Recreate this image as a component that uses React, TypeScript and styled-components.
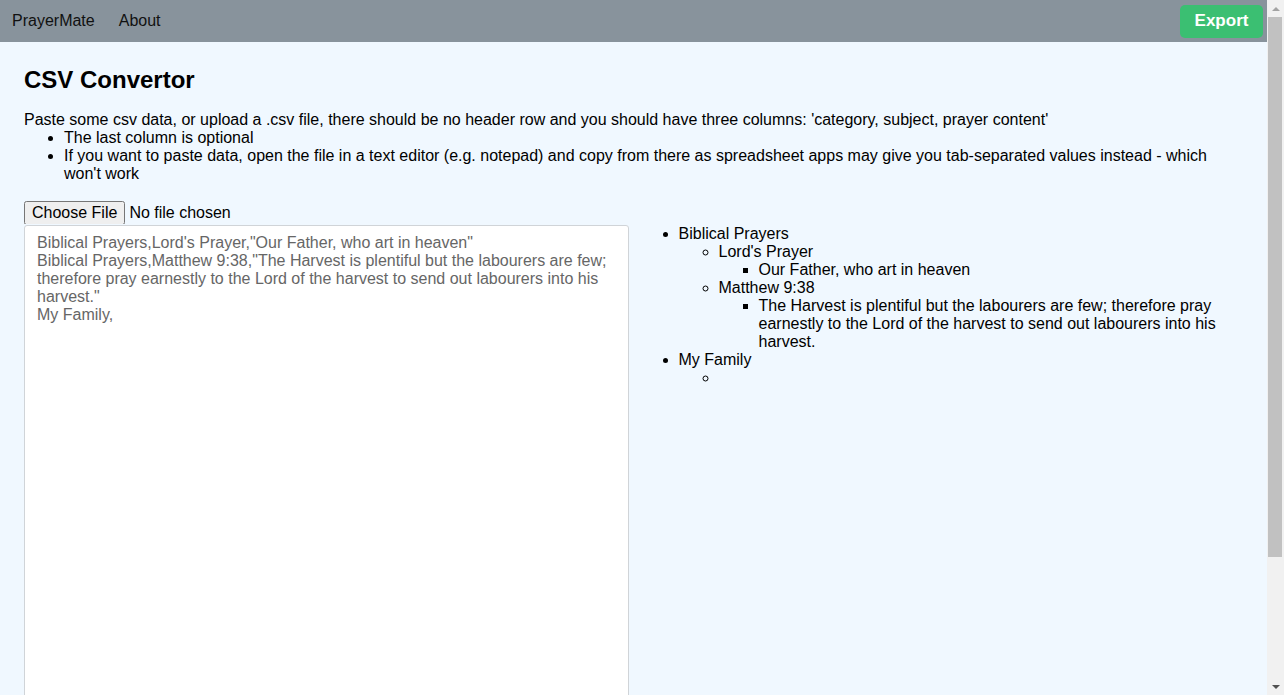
import React, { useState } from 'react';
import styled, { createGlobalStyle } from 'styled-components';

const GlobalStyle = createGlobalStyle`
  html, body {
    margin: 0;
    padding: 0;
    overflow: hidden;
    background: #f0f8ff;
    font-family: "Liberation Sans", Arial, sans-serif;
    font-size: 16px;
    color: #000;
  }
`;

const Shell = styled.div`
  display: grid;
  grid-template-columns: 1fr 17px;
  height: 100vh;
  background: #f0f8ff;
`;

const Page = styled.div`
  overflow: hidden;
  min-width: 0;
`;

const ScrollRail = styled.div`
  display: flex;
  flex-direction: column;
  background: #f1f1f1;
`;

const RailButton = styled.div<{ dir: 'up' | 'down' }>`
  flex: 0 0 17px;
  display: flex;
  align-items: center;
  justify-content: center;
  &::before {
    content: '';
    width: 0;
    height: 0;
    border-left: 4px solid transparent;
    border-right: 4px solid transparent;
    ${p =>
      p.dir === 'up'
        ? 'border-bottom: 4px solid #a3a3a3;'
        : 'border-top: 4px solid #505050;'}
  }
`;

const RailTrack = styled.div`
  flex: 1;
  display: flex;
  flex-direction: column;
`;

const RailThumb = styled.div`
  height: 540px;
  margin: 0 2px 0 1px;
  background: #c1c1c1;
`;

const Header = styled.header`
  display: flex;
  align-items: center;
  justify-content: space-between;
  height: 42px;
  padding: 0 4px 0 12px;
  background: #88939c;
`;

const Nav = styled.nav`
  display: flex;
  gap: 24px;
`;

const NavLink = styled.a`
  color: #111;
  text-decoration: none;
  font-size: 16px;
  cursor: pointer;
`;

const ExportButton = styled.button`
  background: #3bbf72;
  color: #fff;
  border: none;
  border-radius: 5px;
  height: 33px;
  width: 83px;
  font-family: inherit;
  font-size: 17px;
  font-weight: bold;
  cursor: pointer;
`;

const Main = styled.main`
  padding: 0 24px 24px;
`;

const Title = styled.h1`
  margin: 24px 0 17px;
  font-size: 24px;
  font-weight: bold;
  line-height: 28px;
`;

const Intro = styled.p`
  margin: 0;
  line-height: 18px;
`;

const Notes = styled.ul`
  margin: 0 0 18px;
  padding-left: 40px;
  line-height: 18px;
`;

const Columns = styled.div`
  display: grid;
  grid-template-columns: 1fr 1fr;
  gap: 10px;
  align-items: start;
`;

const LeftColumn = styled.div`
  display: flex;
  flex-direction: column;
`;

const FileInput = styled.input`
  font-family: inherit;
  font-size: 16px;
  height: 23px;
`;

const CsvArea = styled.textarea`
  box-sizing: border-box;
  width: 100%;
  height: 600px;
  margin: 1px 0 0;
  padding: 8px 12px;
  border: 1px solid #d0d4d8;
  border-radius: 3px;
  background: #fff;
  color: #666;
  font-family: "Liberation Sans", Arial, sans-serif;
  font-size: 16px;
  line-height: 18px;
  resize: none;
  outline: none;
`;

const Tree = styled.ul<{ level: number }>`
  margin: ${p => (p.level === 1 ? '24px 0 0' : '0')};
  padding-left: 40px;
  line-height: 18px;
  list-style-type: ${p => (p.level === 1 ? 'disc' : p.level === 2 ? 'circle' : 'square')};
`;

const initialCsv = `Biblical Prayers,Lord's Prayer,"Our Father, who art in heaven"
Biblical Prayers,Matthew 9:38,"The Harvest is plentiful but the labourers are few; therefore pray earnestly to the Lord of the harvest to send out labourers into his harvest."
My Family,`;

type Tree = { name: string; subjects: { name: string; content: string[] }[] }[];

const parseCsv = (text: string): Tree => {
  const out: Tree = [];
  text.split('\n').forEach(line => {
    if (!line.trim()) return;
    const cells: string[] = [];
    let cur = '';
    let quoted = false;
    for (const ch of line) {
      if (ch === '"') quoted = !quoted;
      else if (ch === ',' && !quoted) {
        cells.push(cur);
        cur = '';
      } else cur += ch;
    }
    cells.push(cur);
    const [cat, subj = '', content] = cells;
    let c = out.find(x => x.name === cat);
    if (!c) {
      c = { name: cat, subjects: [] };
      out.push(c);
    }
    let s = c.subjects.find(x => x.name === subj);
    if (!s) {
      s = { name: subj, content: [] };
      c.subjects.push(s);
    }
    if (content) s.content.push(content);
  });
  return out;
};

const App: React.FC = () => {
  const [csv, setCsv] = useState(initialCsv);
  const tree = parseCsv(csv);

  return (
    <Shell>
      <GlobalStyle />
      <Page>
        <Header>
          <Nav>
            <NavLink>PrayerMate</NavLink>
            <NavLink>About</NavLink>
          </Nav>
          <ExportButton>Export</ExportButton>
        </Header>
        <Main>
          <Title>CSV Convertor</Title>
          <Intro>
            Paste some csv data, or upload a .csv file, there should be no header row and you should have three columns: 'category, subject, prayer content'
          </Intro>
          <Notes>
            <li>The last column is optional</li>
            <li>
              If you want to paste data, open the file in a text editor (e.g. notepad) and copy from there as spreadsheet apps may give you tab-separated values instead - which won't work
            </li>
          </Notes>
          <Columns>
            <LeftColumn>
              <div>
                <FileInput type="file" accept=".csv" />
              </div>
              <CsvArea value={csv} onChange={e => setCsv(e.target.value)} spellCheck={false} />
            </LeftColumn>
            <Tree level={1}>
              {tree.map(cat => (
                <li key={cat.name}>
                  {cat.name}
                  <Tree level={2}>
                    {cat.subjects.map(s => (
                      <li key={s.name}>
                        {s.name}
                        {s.content.length > 0 && (
                          <Tree level={3}>
                            {s.content.map((c, i) => (
                              <li key={i}>{c}</li>
                            ))}
                          </Tree>
                        )}
                      </li>
                    ))}
                  </Tree>
                </li>
              ))}
            </Tree>
          </Columns>
        </Main>
      </Page>
      <ScrollRail>
        <RailButton dir="up" />
        <RailTrack>
          <RailThumb />
        </RailTrack>
        <RailButton dir="down" />
      </ScrollRail>
    </Shell>
  );
};

export default App;
